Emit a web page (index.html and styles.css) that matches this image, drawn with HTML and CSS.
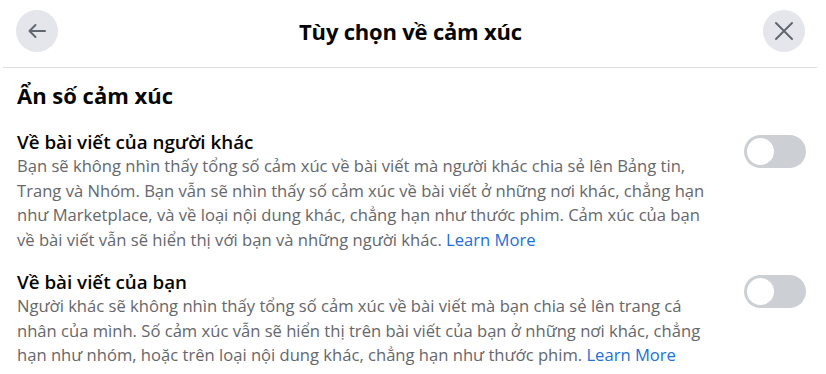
FILE: index.html
```html
<!DOCTYPE html>
<html lang="vi">

<head>
  <meta charset="UTF-8" />
  <meta name="viewport" content="width=device-width, initial-scale=1.0" />
  <title>Tùy chọn về cảm xúc</title>
  <link rel="stylesheet" href="styles.css">
</head>

<body>
  <div class="dialog">
    <div class="dialog-header">
      <button class="circle-btn" aria-label="Quay lại">
        <svg width="20" height="20" viewBox="0 0 20 20">
          <path d="M18 10H2.5M8.5 4L2.5 10l6 6" fill="none" stroke="#606770" stroke-width="2" stroke-linecap="round" stroke-linejoin="round" />
        </svg>
      </button>
      <h2 class="dialog-title">Tùy chọn về cảm xúc</h2>
      <button class="circle-btn" aria-label="Đóng">
        <svg width="22" height="22" viewBox="0 0 22 22">
          <path d="M3 3l16 16M19 3L3 19" fill="none" stroke="#606770" stroke-width="2" stroke-linecap="round" />
        </svg>
      </button>
    </div>
    <div class="divider"></div>

    <div class="dialog-body">
      <h3 class="section-heading">Ẩn số cảm xúc</h3>

      <div class="option-row">
        <div class="option-text">
          <p class="option-title">Về bài viết của người khác</p>
          <p class="option-desc">
            Bạn sẽ không nhìn thấy tổng số cảm xúc về bài viết mà người khác chia sẻ lên Bảng tin,
            Trang và Nhóm. Bạn vẫn sẽ nhìn thấy số cảm xúc về bài viết ở những nơi khác, chẳng hạn
            như Marketplace, và về loại nội dung khác, chẳng hạn như thước phim. Cảm xúc của bạn
            về bài viết vẫn sẽ hiển thị với bạn và những người khác. <a href="#" class="learn-more">Learn More</a>
          </p>
        </div>
        <label class="switch">
          <input type="checkbox" />
          <span class="knob"></span>
        </label>
      </div>

      <div class="option-row">
        <div class="option-text">
          <p class="option-title">Về bài viết của bạn</p>
          <p class="option-desc">
            Người khác sẽ không nhìn thấy tổng số cảm xúc về bài viết mà bạn chia sẻ lên trang cá
            nhân của mình. Số cảm xúc vẫn sẽ hiển thị trên bài viết của bạn ở những nơi khác, chẳng
            hạn như nhóm, hoặc trên loại nội dung khác, chẳng hạn như thước phim. <a href="#" class="learn-more">Learn More</a>
          </p>
        </div>
        <label class="switch">
          <input type="checkbox" />
          <span class="knob"></span>
        </label>
      </div>
    </div>
  </div>
</body>

</html>
```

FILE: styles.css
```css
/* Dialog */
body {
  margin: 0;
  background: #fff;
  font-family: 'Open Sans', 'Noto Sans', sans-serif;
  color: #050505;
}

.dialog {
  width: 100%;
}

.dialog-header {
  display: grid;
  grid-template-columns: 42px 1fr 42px;
  align-items: center;
  padding: 10px 21px 15px 16px;
}

.circle-btn {
  width: 42px;
  height: 42px;
  border: none;
  border-radius: 50%;
  background: #e4e6eb;
  display: flex;
  align-items: center;
  justify-content: center;
  padding: 0;
  cursor: pointer;
}

.dialog-title {
  margin: 0;
  text-align: center;
  font-size: 22px;
  font-weight: 700;
  letter-spacing: -0.2px;
}

.divider {
  height: 1px;
  background: #dadde1;
  margin: 0 9px 0 3px;
}

.dialog-body {
  padding: 12px 20px 0 17px;
}

.section-heading {
  margin: 0 0 20px;
  font-size: 22px;
  font-weight: 700;
  line-height: 30px;
}

.option-row {
  display: flex;
  justify-content: space-between;
  align-items: flex-start;
  margin-bottom: 18px;
}

.option-text {
  width: 692px;
}

.option-title {
  margin: 0;
  font-size: 18.8px;
  font-weight: 600;
  line-height: 24px;
}

.option-desc {
  margin: 0;
  font-size: 16.6px;
  line-height: 24.5px;
  color: #65676b;
}

.learn-more {
  color: #216fdb;
  text-decoration: none;
}

/* Toggle */
.switch {
  position: relative;
  width: 62px;
  height: 33px;
  margin-top: 5px;
  flex-shrink: 0;
  cursor: pointer;
}

.switch input {
  display: none;
}

.switch .knob {
  display: block;
  width: 100%;
  height: 100%;
  border-radius: 17px;
  background: #ccd0d5;
}

.switch .knob::after {
  content: "";
  position: absolute;
  left: 1px;
  top: 1px;
  width: 27px;
  height: 27px;
  border-radius: 50%;
  background: #fff;
  border: 2px solid #ccd0d5;
}
```
